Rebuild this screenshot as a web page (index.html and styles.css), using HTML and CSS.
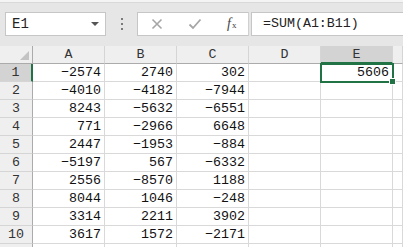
FILE: index.html
```html
<!DOCTYPE html>
<html lang="zh">
<head>
    <meta charset="UTF-8">
    <title>Sheet1</title>
    <link rel="stylesheet" href="styles.css">
</head>
<body>

<div class="topline"></div>
<div class="toolbar">
    <div class="namebox">
        <span>E1</span>
        <span class="caret"></span>
    </div>
    <div class="grip"><i></i><i></i><i></i></div>
    <div class="buttons">
        <svg class="btn" width="12" height="12" viewBox="0 0 12 12">
            <path d="M1.5 1.5 L10.5 10.5 M10.5 1.5 L1.5 10.5" stroke="#a6a6a6" stroke-width="1.6" fill="none"/>
        </svg>
        <svg class="btn" width="14" height="12" viewBox="0 0 14 12">
            <path d="M1.5 6.5 L5 10 L12.5 1.5" stroke="#a6a6a6" stroke-width="1.8" fill="none"/>
        </svg>
        <span class="fx"><i>f</i><small>x</small></span>
    </div>
    <div class="formula">=SUM(A1:B11)</div>
</div>

<div class="sheet" id="sheet"></div>

<script>
    let data = [
        [-2574, 2740, 302],
        [-4010, -4182, -7944],
        [8243, -5632, -6551],
        [771, -2966, 6648],
        [2447, -1953, -884],
        [-5197, 567, -6332],
        [2556, -8570, 1188],
        [8044, 1046, -248],
        [3314, 2211, 3902],
        [3617, 1572, -2171]
    ];
    let cols = ["A", "B", "C", "D", "E", ""];

    function fmt(n) {
        return n < 0 ? "\u2212" + (-n) : String(n);
    }

    let html = '<div class="corner"><span class="tri"></span></div>';
    cols.forEach(function (c) {
        html += '<div class="colhead' + (c === "E" ? ' active' : '') + '">' + c + '</div>';
    });
    data.forEach(function (row, i) {
        html += '<div class="rowhead' + (i === 0 ? ' active' : '') + '">' + (i + 1) + '</div>';
        row.forEach(function (v) {
            html += '<div class="cell">' + fmt(v) + '</div>';
        });
        html += '<div class="cell"></div>';
        if (i === 0) {
            html += '<div class="cell selected">5606<span class="handle"></span></div>';
        } else {
            html += '<div class="cell"></div>';
        }
        html += '<div class="cell"></div>';
    });
    // row 11 is only partly visible, no label shows
    html += '<div class="rowhead"></div>';
    for (let k = 0; k < 6; k++) html += '<div class="cell"></div>';
    document.getElementById("sheet").innerHTML = html;
</script>

</body>
</html>
```

FILE: styles.css
```css
body {
    margin: 0;
    background-color: #fff;
    font-family: "Liberation Mono", monospace;
    overflow: hidden;
}
.topline {
    height: 2px;
    background-color: #f4f4f4;
    border-bottom: 1px solid #d9d9d9;
}
.toolbar {
    height: 43px;
    background-color: #e6e6e6;
    display: flex;
    align-items: flex-start;
    padding-top: 9px;
    box-sizing: border-box;
}
.namebox {
    margin-left: 5px;
    width: 101px;
    height: 24px;
    box-sizing: border-box;
    background-color: #fff;
    border: 1px solid #c6c6c6;
    display: flex;
    align-items: center;
    justify-content: space-between;
    padding: 0 6px 0 6px;
    font-size: 14px;
    color: #222;
}
.caret {
    width: 0;
    height: 0;
    border-left: 4px solid transparent;
    border-right: 4px solid transparent;
    border-top: 4px solid #555;
}
.grip {
    width: 31px;
    display: flex;
    flex-direction: column;
    align-items: center;
    gap: 3px;
    padding-top: 6px;
}
.grip i {
    width: 2px;
    height: 2px;
    background-color: #7a7a7a;
}
.buttons {
    width: 112px;
    height: 24px;
    box-sizing: border-box;
    background-color: #fff;
    border: 1px solid #c6c6c6;
    border-right: 1px solid #d0d0d0;
    display: flex;
    align-items: center;
    padding-left: 13px;
}
.btn {
    margin-right: 25px;
}
.fx {
    font-family: "Liberation Serif", serif;
    color: #444;
    font-size: 14px;
}
.fx small {
    font-size: 9px;
    margin-left: 1px;
}
.formula {
    flex: 1;
    height: 24px;
    box-sizing: border-box;
    margin-left: 2px;
    background-color: #fff;
    border: 1px solid #c6c6c6;
    border-right: none;
    padding-left: 11px;
    font-size: 13.3px;
    line-height: 22px;
    color: #222;
}
.sheet {
    display: grid;
    grid-template-columns: 33px repeat(5, 72px) 1fr;
    grid-template-rows: 18px;
    grid-auto-rows: 18px;
    font-size: 13.3px;
    color: #111;
}
.corner, .colhead, .rowhead {
    background-color: #efefef;
    box-sizing: border-box;
}
.corner {
    position: relative;
    border-right: 1px solid #ababab;
    border-bottom: 1px solid #ababab;
}
.tri {
    position: absolute;
    right: 3px;
    bottom: 3px;
    width: 0;
    height: 0;
    border-left: 9px solid transparent;
    border-bottom: 9px solid #c3c3c3;
}
.colhead {
    border-right: 1px solid #d5d5d5;
    border-bottom: 1px solid #ababab;
    text-align: center;
    line-height: 18px;
    color: #333;
}
.colhead.active {
    background-color: #d3d3d3;
    border-bottom: 2px solid #217346;
}
.rowhead {
    border-right: 1px solid #ababab;
    border-bottom: 1px solid #d5d5d5;
    text-align: center;
    line-height: 17px;
    color: #333;
}
.rowhead.active {
    background-color: #d3d3d3;
    border-right: 2px solid #217346;
}
.cell {
    box-sizing: border-box;
    border-right: 1px solid #d9d9d9;
    border-bottom: 1px solid #d9d9d9;
    text-align: right;
    padding-right: 3px;
    line-height: 17px;
}
.cell.selected {
    position: relative;
    outline: 2px solid #217346;
    outline-offset: -1px;
}
.handle {
    position: absolute;
    right: -4px;
    bottom: -4px;
    width: 5px;
    height: 5px;
    background-color: #217346;
    border: 1px solid #fff;
}
```
